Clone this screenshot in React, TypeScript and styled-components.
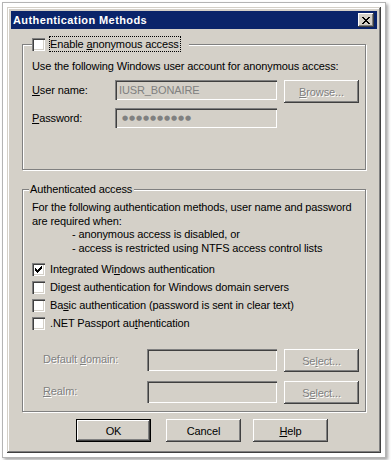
import React from "react";
import styled, { createGlobalStyle } from "styled-components";

const FACE = "#d4d0c8";
const FONT = `"Liberation Sans", Arial, sans-serif`;

const GlobalStyle = createGlobalStyle`
  html, body { margin: 0; padding: 0; background: #ffffff; }
  body { font-family: ${FONT}; font-size: 11px; color: #000; letter-spacing: -0.12px; }
  * { box-sizing: border-box; }
`;

const Photo = styled.div`
  margin: 2px;
  width: fit-content;
  border: 1px solid #b4b4b4;
  padding: 4px;
  background: #fff;
  box-shadow: 2px 2px 3px rgba(0, 0, 0, 0.35);
`;

const Window = styled.div`
  width: 374px;
  height: 446px;
  background: ${FACE};
  padding: 4px;
  display: flex;
  flex-direction: column;
  box-shadow: inset -1px -1px #404040, inset 1px 1px ${FACE},
    inset -2px -2px #808080, inset 2px 2px #ffffff;
`;

const TitleBar = styled.div`
  height: 18px;
  background: #0a246a;
  display: flex;
  align-items: center;
  justify-content: space-between;
  padding: 0 3px 0 2px;
`;

const Title = styled.span`
  color: #fff;
  font-weight: bold;
  font-size: 11px;
  line-height: 18px;
  letter-spacing: 0.4px;
`;

const CloseButton = styled.div`
  width: 16px;
  height: 14px;
  background: ${FACE};
  display: flex;
  align-items: center;
  justify-content: center;
  box-shadow: inset -1px -1px #404040, inset 1px 1px #ffffff,
    inset -2px -2px #808080;
`;

const Client = styled.div`
  flex: 1;
  display: flex;
  flex-direction: column;
  padding: 0 11px;
`;

const Group = styled.fieldset<{ $top: number; $bottom: number }>`
  margin: ${(p) => p.$top}px 0 0 0;
  padding: 0 0 ${(p) => p.$bottom}px 0;
  border: 1px solid #808080;
  box-shadow: inset 1px 1px #ffffff, 1px 1px #ffffff;
  min-width: 0;
`;

const Legend = styled.legend<{ $ml: number }>`
  margin-left: ${(p) => p.$ml}px;
  padding: 0 2px 0 1px;
  display: flex;
  align-items: center;
  background: ${FACE};
  line-height: 13px;
`;

const CheckLegend = styled(Legend)`
  padding: 0 8px 0 0;
  height: 16px;
`;

const FocusLabel = styled.span`
  margin-left: 4px;
  border: 1px dotted #000;
  padding: 0 1px 0 0;
  line-height: 14px;
`;

const Body = styled.div<{ $pt: number; $pl: number }>`
  padding: ${(p) => p.$pt}px 6px 0 ${(p) => p.$pl}px;
  display: flex;
  flex-direction: column;
`;

const Line = styled.div<{ $indent?: number; $lh?: number }>`
  line-height: ${(p) => p.$lh ?? 13}px;
  white-space: nowrap;
  padding-left: ${(p) => p.$indent ?? 0}px;
`;

const FieldGrid = styled.div<{ $label: number; $mt: number; $rowGap: number; $pl?: number }>`
  display: grid;
  grid-template-columns: ${(p) => p.$label}px 1fr 75px;
  column-gap: 7px;
  row-gap: ${(p) => p.$rowGap}px;
  margin-top: ${(p) => p.$mt}px;
  padding-left: ${(p) => p.$pl ?? 0}px;
  align-items: start;
`;

const Label = styled.span<{ $disabled?: boolean }>`
  line-height: 20px;
  white-space: nowrap;
  color: ${(p) => (p.$disabled ? "#808080" : "#000")};
  text-shadow: ${(p) => (p.$disabled ? "1px 1px 0 #ffffff" : "none")};
`;

const TextBox = styled.div<{ $h?: number }>`
  height: ${(p) => p.$h ?? 20}px;
  background: ${FACE};
  padding: 0 4px;
  display: flex;
  align-items: center;
  color: #808080;
  box-shadow: inset 1px 1px #808080, inset 2px 2px #404040,
    inset -1px -1px #ffffff, inset -2px -2px ${FACE};
`;

const Dots = styled.span`
  font-family: "DejaVu Sans", sans-serif;
  font-size: 7px;
  letter-spacing: 0.9px;
  color: #808080;
  margin-left: 3px;
`;

const Button = styled.div<{ $disabled?: boolean; $default?: boolean; $mr?: number }>`
  width: 75px;
  height: 23px;
  flex: none;
  margin-right: ${(p) => p.$mr ?? 0}px;
  background: ${FACE};
  display: flex;
  align-items: center;
  justify-content: center;
  white-space: nowrap;
  color: ${(p) => (p.$disabled ? "#808080" : "#000")};
  text-shadow: ${(p) => (p.$disabled ? "1px 1px 0 #ffffff" : "none")};
  border: ${(p) => (p.$default ? "1px solid #000" : "none")};
  box-shadow: inset -1px -1px #404040, inset 1px 1px #ffffff,
    inset -2px -2px #808080;
`;

const CheckList = styled.div`
  display: flex;
  flex-direction: column;
  margin-top: 5px;
`;

const CheckRow = styled.div`
  height: 18px;
  display: flex;
  align-items: center;
  white-space: nowrap;
`;

const Box = styled.span`
  width: 13px;
  height: 13px;
  flex: none;
  background: #fff;
  display: inline-flex;
  align-items: center;
  justify-content: center;
  box-shadow: inset 1px 1px #808080, inset 2px 2px #404040,
    inset -1px -1px #ffffff, inset -2px -2px ${FACE};
`;

const CheckText = styled.span`
  margin-left: 5px;
`;

const ButtonRow = styled.div`
  display: flex;
  margin-top: 7px;
  padding-left: 54px;
`;

const Check = ({ checked }: { checked?: boolean }) => (
  <Box>
    {checked && (
      <svg width="7" height="7" viewBox="0 0 7 7" shapeRendering="crispEdges">
        <path
          d="M6 0h1v1h-1zM5 1h2v1h-2zM4 2h3v1h-3zM0 2h1v1h-1zM0 3h2v1h-2zM3 3h3v1h-3zM0 4h5v1h-5zM1 5h3v1h-3zM2 6h1v1h-1z"
          fill="#000"
        />
      </svg>
    )}
  </Box>
);

export default function App() {
  return (
    <>
      <GlobalStyle />
      <Photo>
        <Window>
          <TitleBar>
            <Title>Authentication Methods</Title>
            <CloseButton>
              <svg width="8" height="7" viewBox="0 0 8 7" shapeRendering="crispEdges">
                <path
                  d="M0 0h2v1h-2zM6 0h2v1h-2zM1 1h2v1h-2zM5 1h2v1h-2zM2 2h4v1h-4zM3 3h2v1h-2zM2 4h4v1h-4zM1 5h2v1h-2zM5 5h2v1h-2zM0 6h2v1h-2zM6 6h2v1h-2z"
                  fill="#000"
                />
              </svg>
            </CloseButton>
          </TitleBar>
          <Client>
            <Group $top={7} $bottom={41}>
              <CheckLegend $ml={9}>
                <Check />
                <FocusLabel>
                  Enable <u>a</u>nonymous access
                </FocusLabel>
              </CheckLegend>
              <Body $pt={8} $pl={9}>
                <Line>Use the following Windows user account for anonymous access:</Line>
                <FieldGrid $label={76} $mt={7} $rowGap={5}>
                  <Label>
                    <u>U</u>ser name:
                  </Label>
                  <TextBox>IUSR_BONAIRE</TextBox>
                  <Button $disabled>
                    <span>
                      <u>B</u>rowse...
                    </span>
                  </Button>
                  <Label>
                    <u>P</u>assword:
                  </Label>
                  <TextBox>
                    <Dots>●●●●●●●●●●</Dots>
                  </TextBox>
                  <span />
                </FieldGrid>
              </Body>
            </Group>

            <Group $top={13} $bottom={7}>
              <Legend $ml={6}>Authenticated access</Legend>
              <Body $pt={5} $pl={9}>
                <Line $lh={13.5}>
                  For the following authentication methods, user name and password
                </Line>
                <Line $lh={13.5}>are required when:</Line>
                <Line $lh={13.5} $indent={40}>
                  - anonymous access is disabled, or
                </Line>
                <Line $lh={13.5} $indent={40}>
                  - access is restricted using NTFS access control lists
                </Line>
                <CheckList>
                  <CheckRow>
                    <Check checked />
                    <CheckText>
                      Integrated Wi<u>n</u>dows authentication
                    </CheckText>
                  </CheckRow>
                  <CheckRow>
                    <Check />
                    <CheckText>
                      Di<u>g</u>est authentication for Windows domain servers
                    </CheckText>
                  </CheckRow>
                  <CheckRow>
                    <Check />
                    <CheckText>
                      Ba<u>s</u>ic authentication (password is sent in clear text)
                    </CheckText>
                  </CheckRow>
                  <CheckRow>
                    <Check />
                    <CheckText>
                      .NET Passport au<u>t</u>hentication
                    </CheckText>
                  </CheckRow>
                </CheckList>
                <FieldGrid $label={97} $mt={17} $rowGap={9} $pl={11}>
                  <Label $disabled>
                    Default <u>d</u>omain:
                  </Label>
                  <TextBox $h={22} />
                  <Button $disabled>
                    <span>
                      Se<u>l</u>ect...
                    </span>
                  </Button>
                  <Label $disabled>
                    <u>R</u>ealm:
                  </Label>
                  <TextBox $h={22} />
                  <Button $disabled>
                    <span>
                      S<u>e</u>lect...
                    </span>
                  </Button>
                </FieldGrid>
              </Body>
            </Group>

            <ButtonRow>
              <Button $default $mr={15}>
                OK
              </Button>
              <Button $mr={12}>Cancel</Button>
              <Button>
                <span>
                  <u>H</u>elp
                </span>
              </Button>
            </ButtonRow>
          </Client>
        </Window>
      </Photo>
    </>
  );
}
